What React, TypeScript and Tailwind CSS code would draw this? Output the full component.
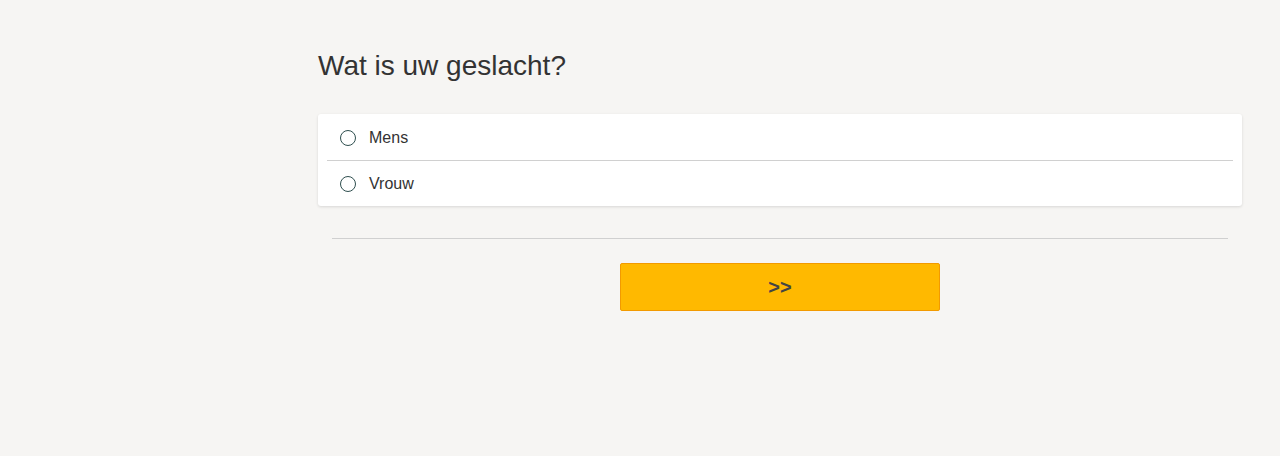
import React from "react";

export default function App() {
  const options = ["Mens", "Vrouw"];
  return (
    <div
      className="min-h-[456px] w-full bg-[#f6f5f3] text-[#333333]"
      style={{ fontFamily: '"Liberation Sans", Arial, sans-serif' }}
    >
      <div className="pl-[318px] pr-[38px] pt-[49px]">
        <h1 className="text-[28px] leading-[34px] font-normal text-[#333333]">Wat is uw geslacht?</h1>
        <div className="mt-[31px] rounded-[3px] bg-white shadow-[0_1px_3px_rgba(0,0,0,0.12)]">
          <label className="flex h-[46px] items-center pl-[22px] pt-[2px]">
            <span className="h-[16px] w-[16px] rounded-full border border-[#2f4f4f] bg-white" />
            <span className="ml-[13px] text-[16px] text-[#333333]">{options[0]}</span>
          </label>
          <div className="mx-[9px] h-px bg-[#d0d0d0]" />
          <label className="flex h-[45px] items-center pl-[22px]">
            <span className="h-[16px] w-[16px] rounded-full border border-[#2f4f4f] bg-white" />
            <span className="ml-[13px] text-[16px] text-[#333333]">{options[1]}</span>
          </label>
        </div>
        <div className="mx-[14px] mt-[32px] h-px bg-[#d0d0d0]" />
        <div className="mt-[24px] flex justify-center">
          <button className="flex h-[48px] w-[320px] items-center justify-center rounded-[2px] border border-[#f29a00] bg-[#ffb900] text-[20px] font-bold text-[#444444]">
            &gt;&gt;
          </button>
        </div>
      </div>
    </div>
  );
}
